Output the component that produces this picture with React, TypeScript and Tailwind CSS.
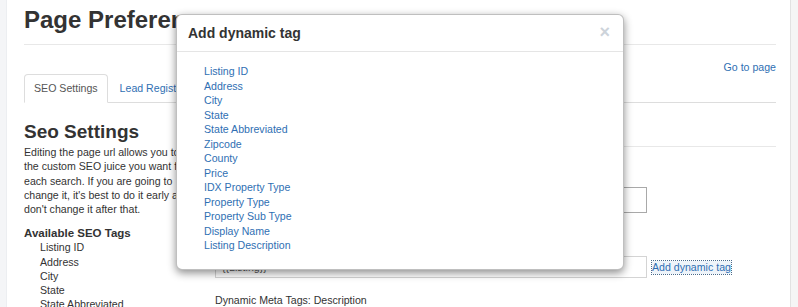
const seoTags = ['Listing ID', 'Address', 'City', 'State', 'State Abbreviated', 'Zipcode', 'County', 'Price'];

const dynamicTags = [
  'Listing ID',
  'Address',
  'City',
  'State',
  'State Abbreviated',
  'Zipcode',
  'County',
  'Price',
  'IDX Property Type',
  'Property Type',
  'Property Sub Type',
  'Display Name',
  'Listing Description',
];

export default function App() {
  return (
    <div className="relative flex h-[307px] w-[798px] overflow-hidden bg-white font-['Liberation_Sans',Arial,sans-serif] text-[10.6px] text-[#333]">
      <div className="w-[7px] shrink-0 border-r border-[#eceef1] bg-[#f4f5f7]" />

      <main className="min-w-0 flex-1 pl-[17px] pr-[14px]">
        <h1 className="mt-[5px] whitespace-nowrap border-b border-[#e8e8e8] pb-[9px] text-[24px] font-bold leading-[30px] text-[#333]">
          Page Preferences
        </h1>

        <div className="mt-[15px] flex justify-end leading-[14px]">
          <a href="#" className="text-[#2f6fb3]">Go to page</a>
        </div>

        {/* Tabs */}
        <div className="flex border-b border-[#ddd]">
          <div className="-mb-px rounded-t-[4px] border border-[#ddd] border-b-white bg-white px-[9px] py-[6px] leading-[14px] text-[#555]">
            SEO Settings
          </div>
          <div className="ml-[1px] whitespace-nowrap border border-transparent px-[10px] py-[6px] leading-[14px] text-[#2f6fb3]">
            Lead Registration
          </div>
        </div>

        <div className="grid grid-cols-[180px_1fr] gap-x-[11px]">
          {/* Left column */}
          <div>
            <h2 className="mt-[18px] text-[19px] font-bold leading-[22px] text-[#333]">Seo Settings</h2>
            <p className="mt-[2px] leading-[14.25px]">
              Editing the page url allows you to get the custom SEO juice you want for each search. If you are going to
              change it, it's best to do it early and don't change it after that.
            </p>
            <h3 className="mt-[10px] text-[11.5px] font-bold leading-[14px] text-[#333]">Available SEO Tags</h3>
            <ul className="pl-[16px] leading-[14.25px]">
              {seoTags.map(tag => (
                <li key={tag}>{tag}</li>
              ))}
            </ul>
          </div>

          {/* Right column */}
          <div>
            <div className="mt-[43px] border-t border-[#e8e8e8]" />
            <div className="mt-[20px] mb-[6px] leading-[14px]">Page URL</div>
            <input
              readOnly
              value="/listing/{{Listing ID}}"
              className="block h-[26px] w-[432px] border border-[#a9a9a9] px-[5px] text-[10.6px] outline-none"
            />
            <div className="mt-[22px] mb-[7px] leading-[14px]">Dynamic Meta Tags: Title</div>
            <div className="flex items-center">
              <input
                readOnly
                value="{{Listing}}"
                className="block h-[22px] w-[432px] border border-[#d4d4d4] px-[6px] text-[10.6px] text-[#555] outline-none"
              />
              <a href="#" className="ml-[5px] whitespace-nowrap bg-[#eef4fa] leading-[13px] text-[#2f6fb3] outline-1 outline-dotted outline-[#4a6a8a]">
                Add dynamic tag
              </a>
            </div>
            <div className="mt-[15px] leading-[14px]">Dynamic Meta Tags: Description</div>
          </div>
        </div>
      </main>

      <div className="w-[8px] shrink-0 border-l border-[#e2e2e2] bg-[#f5f5f5]" />

      {/* Add dynamic tag modal */}
      <div className="absolute left-[176px] top-[14px] h-[256px] w-[448px] rounded-[6px] border border-black/25 bg-white shadow-[0_3px_9px_rgba(0,0,0,0.45)]">
        <div className="flex h-[37px] items-center justify-between border-b border-[#e5e5e5] pl-[11px] pr-[13px]">
          <h4 className="text-[14px] font-bold text-[#333]">Add dynamic tag</h4>
          <span className="-mt-[3px] text-[18px] font-bold leading-none text-[#cdd3da]">×</span>
        </div>
        <ul className="pl-[27px] pt-[12px] leading-[14.5px]">
          {dynamicTags.map(tag => (
            <li key={tag}>
              <a href="#" className="text-[#2f6fb3]">{tag}</a>
            </li>
          ))}
        </ul>
      </div>
    </div>
  );
}
